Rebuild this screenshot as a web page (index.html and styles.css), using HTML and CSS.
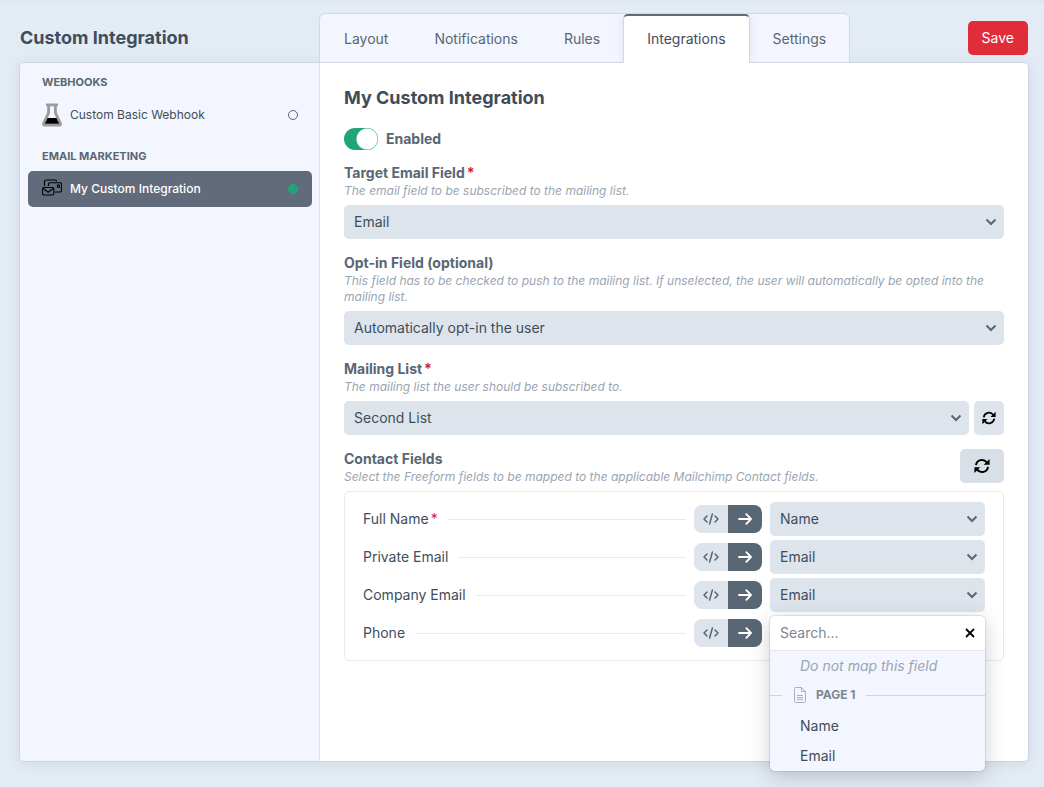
FILE: index.html
```html
<!DOCTYPE html>
<html lang="en">
<head>
<meta charset="utf-8">
<meta name="viewport" content="width=device-width, initial-scale=1">
<title>Custom Integration</title>
<link rel="stylesheet" href="styles.css">
</head>
<body>
<svg class="sprite" aria-hidden="true">
  <symbol id="refresh" viewBox="0 0 16 16">
    <g fill="none" stroke="currentColor" stroke-width="2"><path d="M2 7.2A6 6 0 0 1 12.8 4.4"/><path d="M14 8.800A6 6 0 0 1 3.200 11.600"/></g>
    <path fill="currentColor" d="M15.600.9v5.900H9.700zM.4 15.100V9.200h5.900z"/>
  </symbol>
  <symbol id="code" viewBox="0 0 16 12">
    <g fill="none" stroke="currentColor" stroke-width="1.5" stroke-linecap="round" stroke-linejoin="round"><path d="M4 3 1 6l3 3M12 3l3 3-3 3M9.400 1 6.600 11"/></g>
  </symbol>
  <symbol id="arrow" viewBox="0 0 14 12">
    <path fill="none" stroke="currentColor" stroke-width="1.8" stroke-linecap="round" stroke-linejoin="round" d="M1 6h12M8.300 1.200 13 6l-4.700 4.800"/>
  </symbol>
</svg>

<header class="header">
  <h1 class="header-title">Custom Integration</h1>
  <nav class="tabs">
    <a class="tab" href="#layout">Layout</a>
    <a class="tab" href="#notifications">Notifications</a>
    <a class="tab" href="#rules">Rules</a>
    <a class="tab tab-active" href="#integrations" aria-current="page">Integrations</a>
    <a class="tab" href="#settings">Settings</a>
  </nav>
  <button class="save" type="button">Save</button>
</header>

<div class="panel">
  <aside class="sidebar">
    <section class="side-group">
      <h2 class="side-heading">Webhooks</h2>
      <a class="side-item" href="#webhook">
        <svg class="side-icon" viewBox="0 0 20 24" aria-hidden="true">
          <path fill="#9b9b9b" fill-rule="evenodd" d="M4 .5h12v2.700h-1.200v6.300l4.800 10.300c1 2.200-.2 3.700-2 3.700H2.400c-1.800 0-3-1.500-2-3.700L5.200 9.500V3.200H4zM8 3.200v7L3 20.800h14L12 10.200v-7z"/>
          <path fill="#000" d="M5.600 15h8.800l2.800 5.800H2.800z"/>
        </svg>
        <span class="side-name">Custom Basic Webhook</span>
        <span class="dot"></span>
      </a>
    </section>
    <section class="side-group">
      <h2 class="side-heading">Email Marketing</h2>
      <a class="side-item side-item-active" href="#integration" aria-current="true">
        <svg class="side-icon" viewBox="0 0 20 20" aria-hidden="true">
          <g fill="none" stroke="#000" stroke-width="1.100" stroke-linejoin="round">
            <path d="M2.500 7V2.500q0-1.500 1.500-1.500h9.500q1 0 1 1.500M6.500 7V5q0-1.200 1.200-1.200h10.600q1.200 0 1.200 1.200v6.800q0 1.200-1.200 1.200H13"/>
            <rect x=".6" y="8.500" width="11.200" height="7.500" rx="1.200"/>
            <path d="m.9 9.200 5.300 4 5.300-4M15.500 6h2v2.300h-2z"/>
          </g>
        </svg>
        <span class="side-name">My Custom Integration</span>
        <span class="dot dot-on"></span>
      </a>
    </section>
  </aside>

  <main class="content">
    <h2 class="content-title">My Custom Integration</h2>
    <label class="toggle">
      <input class="toggle-input" type="checkbox" role="switch" checked>
      <span>Enabled</span>
    </label>

    <div class="fields">
      <div class="field">
        <label class="label required" for="target">Target Email Field</label>
        <p class="hint">The email field to be subscribed to the mailing list.</p>
        <select class="select" id="target"><option>Email</option></select>
      </div>
      <div class="field">
        <label class="label" for="optin">Opt-in Field (optional)</label>
        <p class="hint">This field has to be checked to push to the mailing list. If unselected, the user will automatically be opted into the mailing list.</p>
        <select class="select" id="optin"><option>Automatically opt-in the user</option></select>
      </div>
      <div class="field">
        <label class="label required" for="list">Mailing List</label>
        <p class="hint">The mailing list the user should be subscribed to.</p>
        <div class="select-row">
          <select class="select" id="list"><option>Second List</option></select>
          <button class="refresh" type="button" aria-label="Refresh lists"><svg width="14" height="14"><use href="#refresh"/></svg></button>
        </div>
      </div>
      <div class="field">
        <div class="field-head">
          <div>
            <h3 class="label">Contact Fields</h3>
            <p class="hint">Select the Freeform fields to be mapped to the applicable Mailchimp Contact fields.</p>
          </div>
          <button class="refresh refresh-wide" type="button" aria-label="Refresh fields"><svg width="16" height="16"><use href="#refresh"/></svg></button>
        </div>
        <div class="mapping">
          <div class="map-row">
            <label class="map-label required" for="map-name">Full Name</label>
            <span class="map-line"></span>
            <div class="modes">
              <button class="mode" type="button" aria-label="Custom value"><svg width="16" height="12"><use href="#code"/></svg></button>
              <button class="mode mode-on" type="button" aria-label="Map field"><svg width="14" height="12"><use href="#arrow"/></svg></button>
            </div>
            <select class="select map-select" id="map-name"><option>Name</option></select>
          </div>
          <div class="map-row">
            <label class="map-label" for="map-private">Private Email</label>
            <span class="map-line"></span>
            <div class="modes">
              <button class="mode" type="button" aria-label="Custom value"><svg width="16" height="12"><use href="#code"/></svg></button>
              <button class="mode mode-on" type="button" aria-label="Map field"><svg width="14" height="12"><use href="#arrow"/></svg></button>
            </div>
            <select class="select map-select" id="map-private"><option>Email</option></select>
          </div>
          <div class="map-row">
            <label class="map-label" for="map-company">Company Email</label>
            <span class="map-line"></span>
            <div class="modes">
              <button class="mode" type="button" aria-label="Custom value"><svg width="16" height="12"><use href="#code"/></svg></button>
              <button class="mode mode-on" type="button" aria-label="Map field"><svg width="14" height="12"><use href="#arrow"/></svg></button>
            </div>
            <select class="select map-select" id="map-company"><option>Email</option></select>
          </div>
          <div class="map-row">
            <label class="map-label" for="map-phone">Phone</label>
            <span class="map-line"></span>
            <div class="modes">
              <button class="mode" type="button" aria-label="Custom value"><svg width="16" height="12"><use href="#code"/></svg></button>
              <button class="mode mode-on" type="button" aria-label="Map field"><svg width="14" height="12"><use href="#arrow"/></svg></button>
            </div>
            <div class="map-select combo">
              <div class="menu">
                <div class="menu-search">
                  <input class="menu-input" id="map-phone" type="text" placeholder="Search...">
                  <button class="menu-close" type="button" aria-label="Close">
                    <svg width="10" height="10" viewBox="0 0 10 10"><path fill="none" stroke="#000" stroke-width="1.800" d="m1 1 8 8M9 1 1 9"/></svg>
                  </button>
                </div>
                <button class="option option-empty" type="button">Do not map this field</button>
                <div class="menu-group">
                  <svg width="12" height="16" viewBox="0 0 12 16" aria-hidden="true"><path fill="none" stroke="#a9b3be" stroke-linejoin="round" d="M7.500.5H1.500q-1 0-1 1v13q0 1 1 1h9q1 0 1-1v-10zv4h4M3 8.500h6M3 10.500h6M3 12.500h6"/></svg>
                  <span>Page 1</span>
                </div>
                <button class="option" type="button">Name</button>
                <button class="option" type="button">Email</button>
              </div>
            </div>
          </div>
        </div>
      </div>
    </div>
  </main>
</div>
</body>
</html>
```
FILE: styles.css
```css
* { box-sizing: border-box; }

body {
  display: flex;
  flex-direction: column;
  min-height: 100vh;
  margin: 0;
  padding: 13px 15px 25px 19px;
  background: linear-gradient(#dde5ef, #e3ebf4 5px) no-repeat #e3ebf4;
  color: #3f4d5a;
  font: 14px/20px Inter, "Liberation Sans", sans-serif;
}

h1, h2, h3, p { margin: 0; }
a { color: inherit; text-decoration: none; }
button, input, select { margin: 0; border: 0; font: inherit; color: inherit; }
button { display: flex; align-items: center; justify-content: center; padding: 0; cursor: pointer; }
svg { flex: none; }
.sprite { position: absolute; width: 0; height: 0; }

.header { display: flex; align-items: flex-start; }
.header-title {
  width: 300px;
  padding: 13px 0 0 1px;
  font-size: 18px;
  line-height: 24px;
  font-weight: 700;
}

.tabs {
  position: relative;
  z-index: 1;
  display: flex;
  height: 50px;
  margin-bottom: -1px;
  padding-left: 1px;
  border: 1px solid #cfd8e3;
  border-radius: 6px 6px 0 0;
  background: #f3f6fe;
  color: #596673;
}
.tab { display: flex; align-items: center; padding: 2px 23px 0; }
.tab-active {
  margin-bottom: -1px;
  padding: 0 23px 1px;
  border: 1px solid #cfd8e3;
  border-top: 2px solid #616b7b;
  border-bottom: 0;
  border-radius: 5px 5px 0 0;
  background: #fff;
  color: #3f4d5a;
  box-shadow: 0 0 10px rgba(97, 107, 123, 0.14);
  clip-path: inset(0 -12px 0 -12px);
}

.save {
  height: 34px;
  margin: 8px 1px 0 auto;
  padding: 0 14px;
  border-radius: 5px;
  background: #e12d39;
  color: #fff;
}

.panel {
  display: flex;
  flex: 1;
  border: 1px solid #cdd7e2;
  border-radius: 5px;
  background: #fff;
  box-shadow: 0 2px 12px rgba(97, 120, 150, 0.14);
}

.sidebar {
  flex: none;
  width: 300px;
  padding: 10px 7px 10px 8px;
  border-right: 1px solid #dae1eb;
  border-radius: 4px 0 0 4px;
  background: #f3f6fe;
}
.side-group { margin-bottom: 14px; }
.side-heading {
  margin-bottom: 6px;
  padding-left: 14px;
  color: #596673;
  font-size: 11px;
  line-height: 18px;
  font-weight: 700;
  text-transform: uppercase;
}
.side-item {
  display: flex;
  align-items: center;
  gap: 8px;
  height: 36px;
  padding: 0 14px;
  border-radius: 5px;
  font-size: 12px;
}
.side-item-active { background: #616b7b; color: #fff; font-weight: 500; }
.side-icon { width: 20px; }
.side-name { flex: 1; }
.dot { width: 10px; height: 10px; border: 1px solid #596673; border-radius: 50%; }
.dot-on { border-color: #1fa47b; background: #1fa47b; }

.content { flex: 1; min-width: 0; padding: 23px 24px 24px; }
.content-title { margin-bottom: 17px; font-size: 18px; line-height: 24px; font-weight: 700; }

.toggle {
  display: flex;
  align-items: center;
  gap: 8px;
  width: max-content;
  height: 24px;
  margin-bottom: 12px;
  color: #596673;
  font-weight: 700;
}
.toggle-input {
  appearance: none;
  width: 34px;
  height: 22px;
  border-radius: 11px;
  background: radial-gradient(circle at 23px 11px, #fff 10px, #1fa47b 11px);
}

.fields { display: flex; flex-direction: column; gap: 14px; }
.label { display: block; color: #596673; font-size: 14px; line-height: 20px; font-weight: 700; }
.required::after { content: "*"; margin-left: 2px; color: #da1e28; }
.hint { margin-bottom: 6px; color: #9aa5b1; font-size: 12px; line-height: 16px; font-style: italic; }

.select {
  appearance: none;
  display: block;
  width: 100%;
  height: 34px;
  padding: 0 30px 0 10px;
  border-radius: 5px;
  background: #dde4ec url("data:image/svg+xml,%3Csvg xmlns='http://www.w3.org/2000/svg' width='12' height='8'%3E%3Cpath d='M1.500 1.500l4.500 4.500 4.500-4.500' fill='none' stroke='%23596673' stroke-width='2'/%3E%3C/svg%3E") no-repeat right 7px center;
}
.select-row { display: flex; gap: 5px; }
.refresh { flex: none; width: 30px; height: 34px; border-radius: 5px; background: #dde4ec; color: #000; }
.refresh-wide { width: 44px; background: #d8dfe7; }
.field-head { display: flex; justify-content: space-between; }

.mapping {
  display: flex;
  flex-direction: column;
  gap: 4px;
  padding: 10px 18px;
  border: 1px solid #e3eaf2;
  border-radius: 5px;
}
.map-row { display: flex; align-items: center; gap: 8px; }
.map-line { flex: 1; height: 1px; margin-left: 2px; background: #e3ebf4; }
.modes { display: flex; overflow: hidden; border-radius: 8px; }
.mode { width: 34px; height: 28px; background: #dde4ec; color: #596673; }
.mode-on { background: #596673; color: #fff; }
.map-select { flex: none; width: 215px; }

.combo { position: relative; height: 34px; }
.menu {
  position: absolute;
  top: 0;
  left: 0;
  right: 0;
  overflow: hidden;
  border-radius: 5px;
  background: #f3f6fe;
  box-shadow: 0 0 0 1px rgba(63, 77, 90, 0.12), 0 5px 20px rgba(63, 77, 90, 0.28);
}
.menu-search { display: flex; align-items: center; height: 35px; padding: 0 10px; border-bottom: 1px solid #e3e8ee; background: #fff; }
.menu-input { flex: 1; min-width: 0; padding: 0; background: none; outline: 0; }
.menu-input::placeholder { color: #7b8793; opacity: 1; }
.menu-close { background: none; }
.option { justify-content: flex-start; width: 100%; height: 30px; padding: 0 30px; background: none; }
.option-empty { color: #9aa5b1; font-style: italic; }
.menu-group {
  display: flex;
  align-items: center;
  gap: 10px;
  height: 28px;
  margin-bottom: 2px;
  color: #7b8793;
  font-size: 12px;
  font-weight: 700;
  text-transform: uppercase;
}
.menu-group::before, .menu-group::after { content: ""; height: 1px; background: #cbd6e2; }
.menu-group::before { width: 12px; margin-right: 2px; }
.menu-group::after { flex: 1; }
```
